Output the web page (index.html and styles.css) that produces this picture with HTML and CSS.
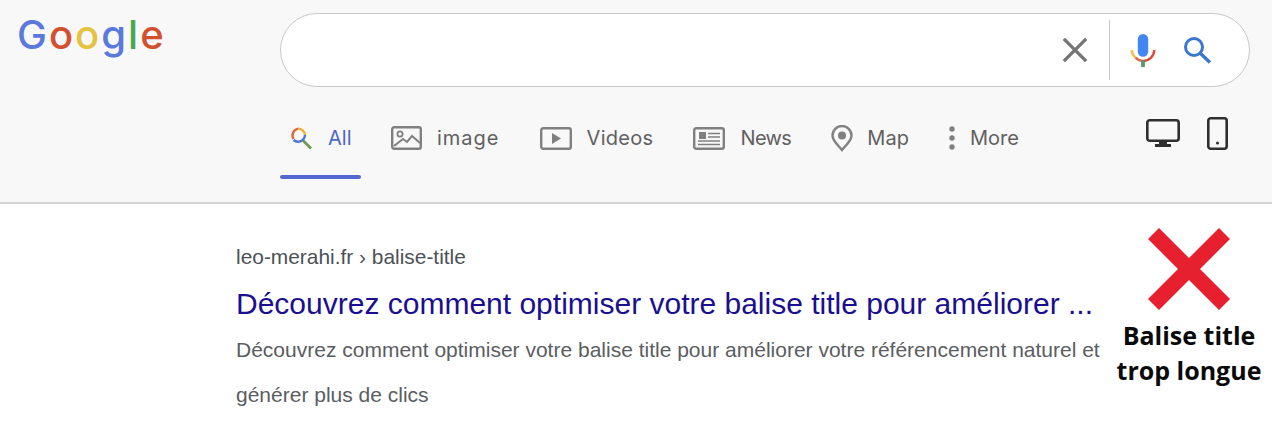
FILE: index.html
```html
<!DOCTYPE html>
<html lang="fr">
<head>
    <meta charset="UTF-8">
    <meta name="viewport" content="width=device-width, initial-scale=1.0">
    <title>Balise title trop longue</title>
    <link rel="stylesheet" href="styles.css">
</head>
<body>

<header class="top">
    <div class="top-row">
        <div class="logo"><span class="blue">G</span><span class="red">o</span><span class="yellow">o</span><span class="blue">g</span><span class="green">l</span><span class="red">e</span></div>
        <div class="search">
            <svg class="icon-clear" width="26" height="26" viewBox="0 0 28 28"><path d="M2 2 L26 26 M26 2 L2 26" stroke="#757575" stroke-width="3.6" fill="none"/></svg>
            <span class="search-sep"></span>
            <svg class="icon-mic" width="28" height="34" viewBox="0 0 28 36">
                <rect x="8.5" y="0" width="11" height="24" rx="5.5" fill="#4285f4"/>
                <path d="M2 17 A12 12 0 0 0 6 25" stroke="#f4c04a" stroke-width="2.6" fill="none"/>
                <path d="M6 25 A12 12 0 0 0 14 28.5" stroke="#dd6a50" stroke-width="2.6" fill="none"/>
                <path d="M14 28.5 A12 12 0 0 0 26 17" stroke="#dd4b3e" stroke-width="2.6" fill="none"/>
                <rect x="12" y="28" width="4" height="7" fill="#5a9a68"/>
            </svg>
            <svg class="icon-search" width="30" height="28" viewBox="0 0 30 28"><circle cx="11" cy="11" r="8.5" stroke="#3a78d0" stroke-width="3" fill="none"/><path d="M17 17 L27 26.5" stroke="#3a78d0" stroke-width="3.4" fill="none"/></svg>
        </div>
    </div>

    <nav class="tabs">
        <a class="tab tab-active">
            <svg width="24" height="24" viewBox="0 0 24 24">
                <path d="M4.5 13 A7 7 0 0 1 9 2.6" stroke="#e0683c" stroke-width="2.4" fill="none"/>
                <path d="M9 2.6 A7 7 0 0 1 16 9" stroke="#e8b23c" stroke-width="2.4" fill="none"/>
                <path d="M16 9 A7 7 0 0 1 4.5 14" stroke="#4f74d8" stroke-width="2.4" fill="none"/>
                <path d="M14 14.5 L22 22.5" stroke="#6f9a52" stroke-width="2.8" fill="none"/>
            </svg>
            <span>All</span>
        </a>
        <a class="tab">
            <svg width="31" height="24" viewBox="0 0 31 24"><rect x="1.2" y="1.2" width="28.6" height="21.6" rx="2" stroke="#808080" stroke-width="2.4" fill="none"/><circle cx="9" cy="8" r="2.6" stroke="#808080" stroke-width="1.8" fill="none"/><path d="M3 20 L12 13 L16 16 L21 10 L29 17" stroke="#808080" stroke-width="2" fill="none"/></svg>
            <span class="label-image">image</span>
        </a>
        <a class="tab">
            <svg width="32" height="23" viewBox="0 0 32 23"><rect x="1.2" y="1.2" width="29.6" height="20.6" rx="2" stroke="#808080" stroke-width="2.4" fill="none"/><path d="M12 6 L21 11.5 L12 17 Z" fill="#808080"/></svg>
            <span class="label-videos">Videos</span>
        </a>
        <a class="tab">
            <svg width="32" height="23" viewBox="0 0 32 23"><rect x="1.2" y="1.2" width="29.6" height="20.6" rx="2" stroke="#808080" stroke-width="2.4" fill="none"/><rect x="6" y="5" width="7" height="7" fill="#808080"/><path d="M15 6.5 H27 M15 10 H27 M5 14 H27 M5 17.5 H27" stroke="#808080" stroke-width="1.5"/></svg>
            <span class="label-news">News</span>
        </a>
        <a class="tab tab-map">
            <svg width="22" height="27" viewBox="0 0 22 27"><path d="M11 25 C7 20 1.5 16 1.5 10.5 A9.5 9.5 0 0 1 20.5 10.5 C20.5 16 15 20 11 25 Z" stroke="#808080" stroke-width="2.4" fill="none"/><circle cx="11" cy="10.5" r="4" fill="#808080"/></svg>
            <span>Map</span>
        </a>
        <a class="tab">
            <svg width="6" height="24" viewBox="0 0 6 24"><circle cx="3" cy="3" r="2.7" fill="#808080"/><circle cx="3" cy="12" r="2.7" fill="#808080"/><circle cx="3" cy="21" r="2.7" fill="#808080"/></svg>
            <span>More</span>
        </a>
        <div class="devices">
            <svg width="34" height="29" viewBox="0 0 34 29"><rect x="1.3" y="1.3" width="31.4" height="20.4" rx="2.5" stroke="#2f2f2f" stroke-width="2.6" fill="none"/><path d="M13 22 H21 V25 H25 V28 H9 V25 H13 Z" fill="#2f2f2f"/></svg>
            <svg width="21" height="33" viewBox="0 0 21 33"><rect x="1.3" y="1.3" width="18.4" height="30.4" rx="2.5" stroke="#2f2f2f" stroke-width="2.6" fill="none"/><circle cx="10.5" cy="26" r="1.5" fill="#2f2f2f"/></svg>
        </div>
    </nav>
</header>

<main class="content">
    <div class="result">
        <div class="crumb">leo-merahi.fr › balise-title</div>
        <div class="result-title">Découvrez comment optimiser votre balise title pour améliorer ...</div>
        <p class="snippet">Découvrez comment optimiser votre balise title pour améliorer votre référencement naturel et générer plus de clics</p>
    </div>
    <aside class="verdict">
        <svg width="82" height="82" viewBox="0 0 82 82"><path d="M11 0 L41 30 L71 0 L82 11 L52 41 L82 71 L71 82 L41 52 L11 82 L0 71 L30 41 L0 11 Z" fill="#e6202e"/></svg>
        <div class="verdict-text">Balise title<br>trop longue</div>
    </aside>
</main>

</body>
</html>
```

FILE: styles.css
```css
body {
    margin: 0;
    background-color: #ffffff;
    font-family: "Liberation Sans", Arial, sans-serif;
    overflow: hidden;
}

/* bandeau du haut */
.top {
    height: 202px;
    background-color: #f8f8f8;
    border-bottom: 2px solid #d4d4d4;
    box-sizing: content-box;
}
.top-row {
    display: flex;
    padding-top: 13px;
}
.logo {
    width: 280px;
    box-sizing: border-box;
    padding-left: 17px;
    font-family: "Inter", sans-serif;
    font-size: 40px;
    font-weight: 500;
    line-height: 44px;
    letter-spacing: 2px;
}
.blue { color: #5b78dc; }
.red { color: #d2502f; }
.yellow { color: #e6c33f; }
.green { color: #4aa84f; }

.search {
    width: 970px;
    height: 74px;
    box-sizing: border-box;
    background-color: #ffffff;
    border: 1.5px solid #c8c8c8;
    border-radius: 37px;
    display: flex;
    align-items: center;
    justify-content: flex-end;
    padding-right: 36px;
}
.icon-clear { margin-right: 21px; }
.search-sep {
    width: 1.5px;
    height: 60px;
    background-color: #c8c8c8;
    margin-right: 19px;
}
.icon-mic { margin-right: 26px; margin-top: 2px; }

/* onglets */
.tabs {
    display: flex;
    align-items: flex-start;
    margin-left: 280px;
    margin-right: 44px;
    margin-top: 30px;
    height: 62px;
    gap: 40px;
    font-family: "Inter", sans-serif;
    font-size: 20px;
    color: #606060;
}
.tab {
    display: flex;
    align-items: center;
    height: 30px;
    margin-top: 6px;
    gap: 15px;
}
.tab-map { gap: 14px; }
.label-image { letter-spacing: 1px; }
.label-videos { letter-spacing: 0.3px; }
.label-news { letter-spacing: -0.6px; }
.tab-active {
    color: #4c68c8;
    position: relative;
    width: 81px;
    box-sizing: border-box;
    padding-left: 9px;
    margin-right: -10px;
}
.tab-active::after {
    content: "";
    position: absolute;
    left: 0;
    right: 0;
    top: 52px;
    height: 4px;
    border-radius: 2px;
    background-color: #5468cf;
}
.devices {
    margin-left: auto;
    display: flex;
    align-items: center;
    gap: 27px;
    height: 33px;
}

/* résultat */
.content {
    display: flex;
    height: 224px;
}
.result {
    width: 870px;
    padding-left: 236px;
    padding-top: 40px;
    flex-shrink: 0;
}
.crumb {
    font-size: 20.9px;
    line-height: 26px;
    color: #4d5156;
}
.result-title {
    font-size: 30px;
    line-height: 34px;
    margin-top: 17px;
    color: #1a0f91;
    white-space: nowrap;
}
.snippet {
    margin: 6px 0 0;
    font-size: 21px;
    line-height: 45px;
    color: #5a5d61;
}
.verdict {
    margin-left: auto;
    width: 166px;
    padding-top: 24px;
    display: flex;
    flex-direction: column;
    align-items: center;
}
.verdict-text {
    margin-top: 8px;
    font-family: "Open Sans", sans-serif;
    font-size: 25px;
    font-weight: 700;
    line-height: 35px;
    text-align: center;
    color: #0a0a0a;
}
```
